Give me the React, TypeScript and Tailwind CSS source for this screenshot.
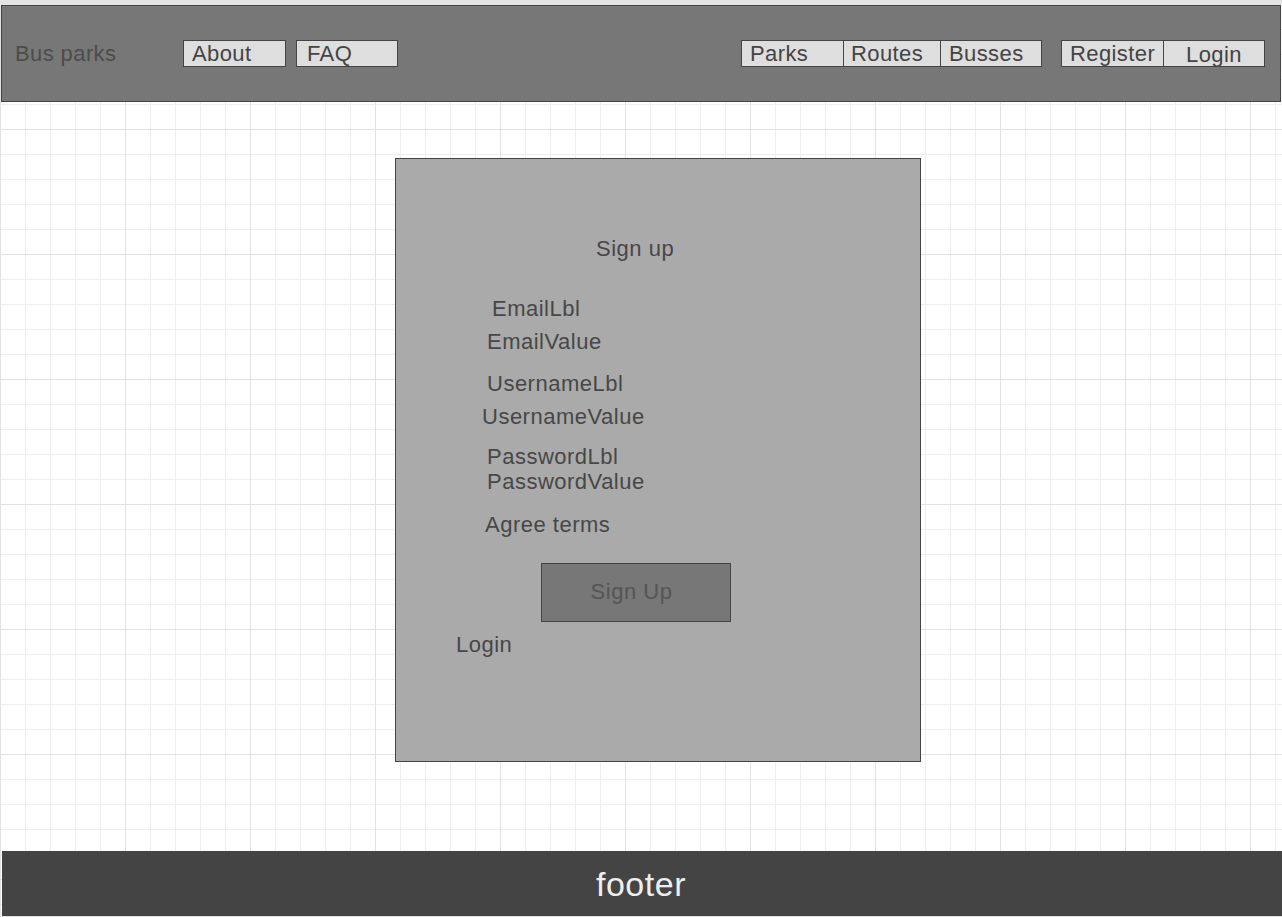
import React from "react";

const font = { fontFamily: '"Liberation Sans", Arial, sans-serif' };

function NavBox({ label, className = "" }: { label: string; className?: string }) {
  return (
    <div
      className={`h-[27px] border border-[#444] bg-[#dedede] text-[#444] text-[22px] leading-[25px] tracking-[0.4px] ${className}`}
    >
      {label}
    </div>
  );
}

export default function App() {
  return (
    <div
      style={font}
      className="relative w-full h-[917px] overflow-hidden bg-white [background-image:linear-gradient(to_right,#e2e2e2_1px,transparent_1px),linear-gradient(to_bottom,#e2e2e2_1px,transparent_1px),linear-gradient(to_right,#eeeeee_1px,transparent_1px),linear-gradient(to_bottom,#eeeeee_1px,transparent_1px)] [background-size:125px_125px,125px_125px,25px_25px,25px_25px] [background-position:0_4px,0_4px,0_4px,0_4px] flex flex-col"
    >
      <div className="h-[5px] bg-[#e3e3e3] shrink-0" />
      <header className="ml-[1px] w-[1280px] h-[97px] shrink-0 border border-[#444] bg-[#777777] flex items-center pl-[13px] pr-[15px]">
        <div className="w-[168px] text-[#4c4c4c] text-[22px] leading-[26px] tracking-[0.4px]">Bus parks</div>
        <NavBox label="About" className="w-[103px] pl-[8px]" />
        <NavBox label="FAQ" className="w-[102px] pl-[10px] ml-[10px]" />
        <div className="flex-1" />
        <div className="flex">
          <NavBox label="Parks" className="w-[103px] pl-[8px]" />
          <NavBox label="Routes" className="w-[98px] pl-[7px] -ml-px" />
          <NavBox label="Busses" className="w-[102px] pl-[8px] -ml-px" />
        </div>
        <div className="flex ml-[19px]">
          <NavBox label="Register" className="w-[103px] pl-[8px]" />
          <NavBox label="Login" className="w-[102px] text-center pt-[1px] -ml-px" />
        </div>
      </header>

      <main className="h-[749px] shrink-0">
        <div className="ml-[395px] mt-[56px] w-[526px] h-[604px] border border-[#444] bg-[#aaaaaa] flex flex-col items-start text-[#474747] text-[22px] leading-[26px] tracking-[0.5px]">
          <div className="mt-[77px] ml-[200px]">Sign up</div>
          <div className="mt-[34px] ml-[96px]">EmailLbl</div>
          <div className="mt-[7px] ml-[91px]">EmailValue</div>
          <div className="mt-[16px] ml-[91px]">UsernameLbl</div>
          <div className="mt-[7px] ml-[86px]">UsernameValue</div>
          <div className="mt-[14px] ml-[91px]">PasswordLbl</div>
          <div className="-mt-px ml-[91px]">PasswordValue</div>
          <div className="mt-[17px] ml-[89px]">Agree terms</div>
          <div className="mt-[25px] ml-[145px] w-[190px] h-[59px] border border-[#444] bg-[#777777] text-[#555] flex items-center justify-center pr-[9px] pb-[1px]">
            Sign Up
          </div>
          <div className="mt-[10px] ml-[60px]">Login</div>
        </div>
      </main>

      <footer className="ml-[2px] w-[1280px] h-[65px] shrink-0 bg-[#444444] flex items-center justify-center pr-[2px] text-[#eeeeee] text-[34px] leading-none tracking-[0.5px]">
        footer
      </footer>
      <div className="h-[1px] bg-[#e0e0e0] shrink-0" />
    </div>
  );
}
